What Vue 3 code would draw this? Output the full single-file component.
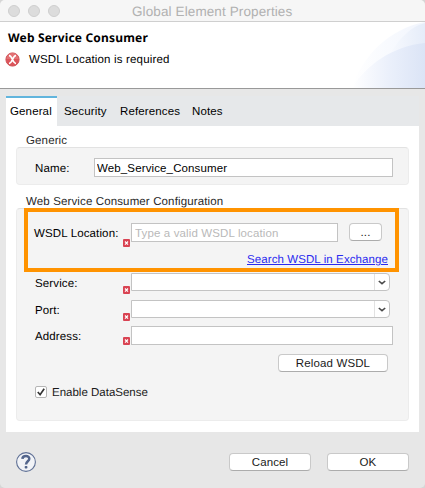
<script setup>
import { ref } from 'vue'

const tabs = ['General', 'Security', 'References', 'Notes']
const active = ref('General')
const name = ref('Web_Service_Consumer')
</script>

<template>
  <div class="window">
    <header class="titlebar">
      <span v-for="n in 3" :key="n" class="light"></span>
      <span class="title">Global Element Properties</span>
    </header>

    <section class="banner">
      <svg class="swirl" width="73" height="66" viewBox="0 0 73 66">
        <defs>
          <linearGradient id="outer"><stop offset="0" stop-color="#fff" /><stop offset="1" stop-color="#f1f5fd" /></linearGradient>
          <linearGradient id="mid"><stop offset="0" stop-color="#f8fafe" /><stop offset="1" stop-color="#e5ecf9" /></linearGradient>
          <linearGradient id="inner"><stop offset="0" stop-color="#fff" /><stop offset=".5" stop-color="#ebf0fb" /><stop offset="1" stop-color="#dbe4f6" /></linearGradient>
        </defs>
        <path d="M0 66C10 35 36 7 73 0V66Z" fill="url(#outer)" />
        <path d="M36 36C43 22 56 5 73 1V66H36Z" fill="url(#mid)" />
        <path d="M0 66C14 43 41 24 73 21V66Z" fill="url(#inner)" />
      </svg>
      <h1>Web Service Consumer</h1>
      <div class="message">
        <svg width="15" height="15" viewBox="0 0 15 15">
          <circle cx="7.5" cy="7.5" r="6.6" fill="#dc555b" stroke="#cf5357" />
          <path d="M1.5 7A6 6 0 0 1 13.5 7Z" fill="#e88386" opacity=".6" />
          <path d="M4 3.6Q5.6 3.4 7.5 7.5Q9.4 11.6 11 11.3M11 3.6Q9.4 3.4 7.5 7.5Q5.6 11.6 4 11.3" fill="none" stroke="#fff" stroke-width="1.7" />
        </svg>
        <span>WSDL Location is required</span>
      </div>
    </section>

    <main class="panel">
      <nav class="tabs">
        <button v-for="t in tabs" :key="t" class="tab" :class="[{ active: t === active }, t.toLowerCase()]" @click="active = t">{{ t }}</button>
      </nav>

      <div class="legend first">Generic</div>
      <div class="group generic">
        <label>Name:</label>
        <input v-model="name" class="field" />
      </div>

      <div class="legend second">Web Service Consumer Configuration</div>
      <div class="group config">
        <div class="highlight">
          <div class="wsdl-row">
            <label>WSDL Location:</label>
            <i class="error"><svg width="7" height="8" viewBox="0 0 7 8"><path d="M2 2.5L5 5.7M5 2.5L2 5.7" stroke="#fff" stroke-width="1.2" /></svg></i>
            <input class="field" placeholder="Type a valid WSDL location" />
            <button class="btn dots">...</button>
          </div>
          <a class="link">Search WSDL in Exchange</a>
        </div>

        <div v-for="f in ['Service:', 'Port:']" :key="f" class="row" :class="f === 'Port:' ? 'port' : 'service'">
          <label>{{ f }}</label>
          <i class="error"><svg width="7" height="8" viewBox="0 0 7 8"><path d="M2 2.5L5 5.7M5 2.5L2 5.7" stroke="#fff" stroke-width="1.2" /></svg></i>
          <div class="combo">
            <span class="arrow"><svg width="8" height="5" viewBox="0 0 8 5"><path d="M.8 1L4 3.7L7.2 1" fill="none" stroke="#4a4a4a" stroke-width="1.6" /></svg></span>
          </div>
        </div>
        <div class="row address">
          <label>Address:</label>
          <i class="error"><svg width="7" height="8" viewBox="0 0 7 8"><path d="M2 2.5L5 5.7M5 2.5L2 5.7" stroke="#fff" stroke-width="1.2" /></svg></i>
          <input class="field" />
        </div>

        <button class="btn reload">Reload WSDL</button>
        <div class="check">
          <span class="box"><svg width="10" height="10" viewBox="0 0 10 10"><path d="M1.8 5L4.1 7.7L8.2 1.8" fill="none" stroke="#333" stroke-width="1.7" /></svg></span>
          <span class="caption">Enable DataSense</span>
        </div>
      </div>
    </main>

    <footer class="footer">
      <svg class="help" width="20" height="20" viewBox="0 0 20 20">
        <circle cx="10" cy="10" r="9.4" fill="#f1f3f7" stroke="#5f7095" stroke-width="1.1" />
        <path d="M6.4 6.9C6.6 3.2 13.4 3.2 13.3 6.8C13.2 9.3 10 9.3 10 12.6" fill="none" stroke="#53658c" stroke-width="2.5" />
        <rect x="8.7" y="14" width="2.7" height="2.5" rx=".8" fill="#53658c" />
      </svg>
      <button class="btn cancel">Cancel</button>
      <button class="btn ok">OK</button>
    </footer>
  </div>
</template>

<style>
body {
  background: #d6d6d6;
}
</style>

<style scoped>
* {
  box-sizing: border-box;
}
.window {
  width: 425px;
  height: 488px;
  overflow: hidden;
  display: flex;
  flex-direction: column;
  background: #e7e7e7;
  border-radius: 5px;
  font: 11.5px/14px "Liberation Sans", Arial, sans-serif;
  letter-spacing: 0.13px;
  color: #000;
  text-rendering: geometricPrecision;
}
button,
input {
  font: inherit;
  letter-spacing: inherit;
  color: inherit;
  margin: 0;
  outline: 0;
}
.titlebar {
  flex: none;
  height: 22px;
  display: flex;
  gap: 8px;
  padding: 5px 0 0 8px;
  background: #f6f6f6;
  border-bottom: 1px solid #cfcfcf;
}
.light {
  width: 12px;
  height: 12px;
  border: 1px solid #cecece;
  border-radius: 50%;
  background: #dcdcdc;
}
.title {
  margin: -1px 0 0 64px;
  font-size: 13.5px;
  line-height: 15px;
  letter-spacing: 0.11px;
  color: #b1b1b1;
}
.banner {
  position: relative;
  flex: none;
  height: 67px;
  padding: 8px 0 0 8px;
  background: #fff;
  border-bottom: 1px solid #999;
}
.swirl {
  position: absolute;
  right: 0;
  top: 0;
}
h1 {
  margin: 0;
  font: bold 12px/16px "Noto Sans", sans-serif;
  letter-spacing: 0.18px;
}
.message {
  display: flex;
  gap: 9px;
  margin: 6px 0 0 -3px;
}
.message span {
  margin-top: 1px;
  letter-spacing: 0.17px;
}
.panel {
  flex: none;
  display: flex;
  flex-direction: column;
  width: 413px;
  height: 336px;
  margin: 7px 0 0 6px;
  background: #fff;
}
.tabs {
  flex: none;
  display: flex;
  height: 30px;
  background: #e6e8ea;
}
.tab {
  border: 0;
  border-top: 2px solid transparent;
  padding: 0 0 2px;
  background: none;
  text-align: left;
}
.general {
  width: 51px;
  padding-left: 4px;
}
.active {
  border-color: #62b5dd;
  background: #fff;
}
.security {
  width: 63px;
  padding-left: 7px;
}
.references {
  width: 72px;
}
.legend {
  flex: none;
  height: 14px;
  margin-left: 20px;
  padding-top: 1px;
  color: #2a2a2a;
}
.first {
  margin-top: 7px;
}
.second {
  margin-top: 9px;
}
.group {
  flex: none;
  width: 393px;
  margin-left: 10px;
  background: #f4f4f4;
  border: 1px solid #ececec;
  border-top-color: #e2e2e2;
  border-radius: 4px;
}
.generic {
  height: 38px;
  display: flex;
  padding: 10px 0 0 18px;
}
.generic label {
  width: 59px;
  padding-top: 4px;
}
.generic .field {
  width: 299px;
  padding-left: 2px;
}
.field {
  height: 19px;
  padding: 0 3px;
  border: 1px solid #c3c3c3;
  border-radius: 0;
  background: #fff;
}
.field::placeholder {
  color: #b9b9b9;
  opacity: 1;
}
.config {
  height: 213px;
  display: flex;
  flex-direction: column;
}
.highlight {
  flex: none;
  width: 375px;
  height: 64px;
  margin: -1px 0 0 7px;
  padding: 11px 7px 0 6px;
  border: 4px solid #ff9300;
}
.wsdl-row {
  display: flex;
}
.wsdl-row label {
  width: 89px;
  padding-top: 4px;
}
.wsdl-row .field {
  width: 207px;
}
.error {
  width: 7px;
  height: 8px;
  margin-right: 1px;
  border-radius: 1px;
  background: #d94352;
}
.error svg {
  display: block;
}
.wsdl-row .error {
  margin-top: 16px;
}
.link {
  display: block;
  margin-top: 6px;
  text-align: right;
  color: #2b2bef;
  letter-spacing: 0.09px;
  text-decoration: underline;
}
.btn {
  height: 18px;
  padding: 0;
  border: 1px solid #c9c9c9;
  border-bottom-color: #acacac;
  border-radius: 4px;
  background: #fff;
  line-height: 16px;
  color: #1a1a1a;
}
.dots {
  width: 33px;
  margin-left: 11px;
}
.row {
  flex: none;
  display: flex;
  padding-left: 18px;
}
.row label {
  width: 88px;
  padding-top: 4px;
}
.service {
  height: 27px;
  margin-top: 1px;
}
.port {
  height: 26px;
}
.address {
  height: 19px;
}
.row .error {
  margin-top: 13px;
}
.address .error {
  margin-top: 11px;
}
.row .field {
  width: 262px;
}
.combo {
  display: flex;
  justify-content: flex-end;
  width: 259px;
  height: 18px;
  border: 1px solid #c3c3c3;
  border-radius: 0 4px 4px 0;
  background: #fff;
}
.arrow {
  display: flex;
  align-items: center;
  justify-content: center;
  width: 15px;
  border-left: 1px solid #e2e2e2;
}
.reload {
  flex: none;
  width: 110px;
  margin: 9px 0 0 261px;
}
.check {
  display: flex;
  gap: 5px;
  margin: 13px 0 0 18px;
  color: #1a1a1a;
}
.box {
  width: 12px;
  height: 12px;
  margin-top: 1px;
  border: 1px solid #b5b5b5;
  border-radius: 2px;
  background: #fff;
}
.box svg {
  display: block;
}
.caption {
  padding-top: 1px;
  letter-spacing: 0;
}
.footer {
  display: flex;
  padding: 20px 0 0 16px;
}
.cancel {
  width: 82px;
  margin: 1px 16px 0 193px;
}
.ok {
  width: 82px;
  margin-top: 1px;
}
</style>
